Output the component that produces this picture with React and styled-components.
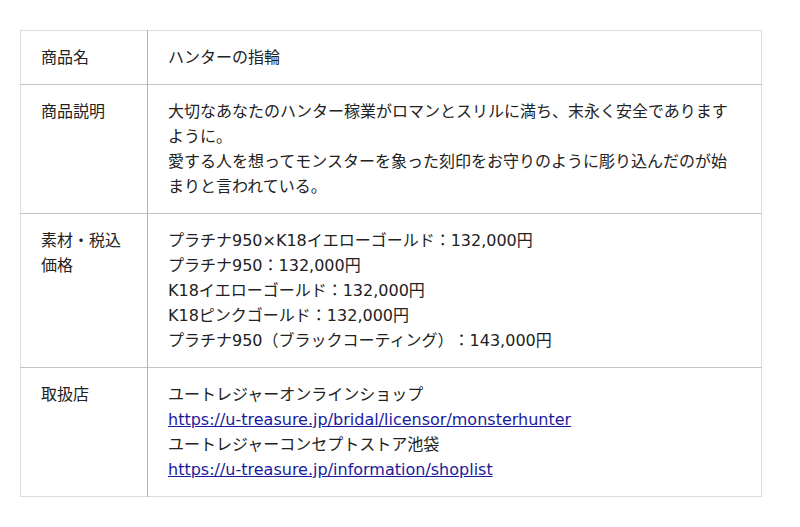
import styled, { createGlobalStyle } from "styled-components";

const GlobalStyle = createGlobalStyle`
  body {
    margin: 0;
    background: #fff;
    font-family: "DejaVu Sans", "Noto Sans CJK JP", sans-serif;
    color: #222;
    text-spacing-trim: space-all;
  }
`;

const Page = styled.div`
  padding: 30px 20px;
`;

const Table = styled.table`
  width: 742px;
  border-collapse: collapse;
  border: 1px solid #ddd;
  font-size: 16px;
  line-height: 25px;
`;

const Row = styled.tr`
  border-top: 1px solid #c4c4c4;
  &:first-child {
    border-top: none;
  }
`;

const Head = styled.th`
  width: 86px;
  padding: 14px 20px 14px 20px;
  text-align: left;
  vertical-align: top;
  font-weight: normal;
  border-right: 1px solid #b0b0b0;
`;

const Cell = styled.td`
  padding: 14px 20px;
  vertical-align: top;
`;

const Line = styled.div``;

const Link = styled.a`
  color: #1a1a9e;
  text-decoration: underline;
`;

const rows = [
  { label: "商品名", lines: ["ハンターの指輪"] },
  {
    label: "商品説明",
    lines: [
      "大切なあなたのハンター稼業がロマンとスリルに満ち、末永く安全でありますように。",
      "愛する人を想ってモンスターを象った刻印をお守りのように彫り込んだのが始まりと言われている。",
    ],
  },
  {
    label: "素材・税込価格",
    lines: [
      "プラチナ950×K18イエローゴールド：132,000円",
      "プラチナ950：132,000円",
      "K18イエローゴールド：132,000円",
      "K18ピンクゴールド：132,000円",
      "プラチナ950（ブラックコーティング）：143,000円",
    ],
  },
  {
    label: "取扱店",
    lines: [
      "ユートレジャーオンラインショップ",
      { href: "https://u-treasure.jp/bridal/licensor/monsterhunter" },
      "ユートレジャーコンセプトストア池袋",
      { href: "https://u-treasure.jp/information/shoplist" },
    ],
  },
];

export default function App() {
  return (
    <>
      <GlobalStyle />
      <Page>
        <Table>
          <tbody>
            {rows.map((r) => (
              <Row key={r.label}>
                <Head>{r.label}</Head>
                <Cell>
                  {r.lines.map((l, i) =>
                    typeof l === "string" ? (
                      <Line key={i}>{l}</Line>
                    ) : (
                      <Line key={i}>
                        <Link href={l.href}>{l.href}</Link>
                      </Line>
                    )
                  )}
                </Cell>
              </Row>
            ))}
          </tbody>
        </Table>
      </Page>
    </>
  );
}
